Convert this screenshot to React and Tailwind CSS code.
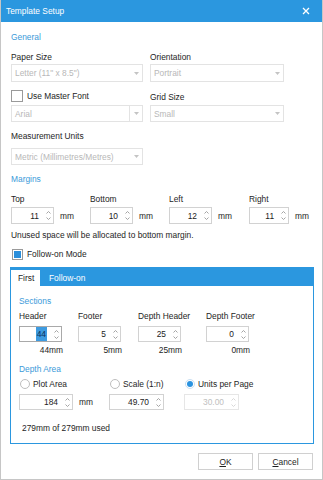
import React from "react";

const Caret = () => (
  <svg width="5" height="3" viewBox="0 0 5 3" className="shrink-0">
    <path d="M0 0 L5 0 L2.5 3 Z" fill="#c4c4c4" />
  </svg>
);

const Arrows = ({ dim }) => (
  <div className="flex flex-col items-center gap-[3px] w-[10px] shrink-0">
    <svg width="5" height="3" viewBox="0 0 5 3">
      <path d="M0.5 2.5 L2.5 0.5 L4.5 2.5" fill="none" stroke={dim ? "#d4d4d4" : "#9a9a9a"} strokeWidth="0.9" />
    </svg>
    <svg width="5" height="3" viewBox="0 0 5 3">
      <path d="M0.5 0.5 L2.5 2.5 L4.5 0.5" fill="none" stroke={dim ? "#d4d4d4" : "#9a9a9a"} strokeWidth="0.9" />
    </svg>
  </div>
);

const Select = ({ text, split, className }) => (
  <div className={`flex items-center border border-[#e3e3e3] bg-white text-[#b8b8b8] ${className}`}>
    <span className="flex-1 pl-[3px] truncate">{text}</span>
    {split && <div className="self-stretch w-px bg-[#e3e3e3]" />}
    <div className="w-[12px] flex justify-center">
      <Caret />
    </div>
  </div>
);

const Spin = ({ value, className, sel, dim }) => (
  <div
    className={`flex items-center border bg-white ${
      dim ? "border-[#e6e6e6] text-[#c0c0c0]" : sel ? "border-[#a9a9a9] text-[#222]" : "border-[#d2d2d2] text-[#222]"
    } ${className}`}
  >
    <div className="flex-1 flex justify-end pr-[4px]">
      {sel ? <span className="bg-[#3e9be0] text-[#0d2f58] px-[1px]">{value}</span> : <span>{value}</span>}
    </div>
    <Arrows dim={dim} />
  </div>
);

const Radio = ({ on, label }) => (
  <div className="flex items-center gap-[3px]">
    <div
      className={`w-[10px] h-[10px] rounded-full border flex items-center justify-center ${
        on ? "border-[#c9dff2]" : "border-[#bdbdbd]"
      }`}
    >
      {on && <div className="w-[6px] h-[6px] rounded-full bg-[#2b93e0]" />}
    </div>
    <span>{label}</span>
  </div>
);

export default function App() {
  return (
    <div className="w-[323px] h-[480px] bg-white border-x border-b border-[#c6c6c6] flex flex-col font-['Liberation_Sans',Arial,sans-serif] text-[8.4px] leading-[14px] text-[#1e1e1e]">
      {/* Title bar */}
      <div className="h-[22px] bg-[#2b97df] flex items-center justify-between pl-[5px] pr-[12px] text-white">
        <span>Template Setup</span>
        <svg width="8" height="8" viewBox="0 0 8 8">
          <path d="M1 1 L7 7 M7 1 L1 7" stroke="#fff" strokeWidth="1.3" />
        </svg>
      </div>

      <div className="flex flex-col px-[10px]">
        <div className="mt-[8px] text-[#3b9ad9]">General</div>

        {/* Paper size / Orientation */}
        <div className="mt-[6px] flex gap-[7px]">
          <div className="w-[132px] flex flex-col">
            <span>Paper Size</span>
            <Select text='Letter (11" x 8.5")' className="h-[18px]" />
          </div>
          <div className="w-[134px] flex flex-col">
            <span>Orientation</span>
            <Select text="Portrait" className="h-[18px]" />
          </div>
        </div>

        {/* Master font / Grid size */}
        <div className="mt-[6px] flex gap-[7px]">
          <div className="w-[132px] flex flex-col">
            <div className="h-[16px] flex items-center gap-[4px]">
              <div className="w-[12px] h-[12px] border border-[#9a9a9a] bg-white" />
              <span>Use Master Font</span>
            </div>
            <Select text="Arial" split className="h-[17px] mt-px" />
          </div>
          <div className="w-[134px] flex flex-col">
            <span className="pt-[2px] h-[16px]">Grid Size</span>
            <Select text="Small" className="h-[17px] mt-px" />
          </div>
        </div>

        <div className="mt-[7px]">Measurement Units</div>
        <Select text="Metric (Millimetres/Metres)" className="w-[132px] h-[17px] mt-[5px]" />

        <div className="mt-[7px] text-[#3b9ad9]">Margins</div>

        <div className="mt-[6px] flex">
          {[
            ["Top", "11", "w-[79px]"],
            ["Bottom", "10", "w-[79px]"],
            ["Left", "12", "w-[80px]"],
            ["Right", "11", "w-[60px]"],
          ].map(([label, v, w]) => (
            <div key={label} className={`${w} flex flex-col`}>
              <span>{label}</span>
              <div className="mt-px flex items-center gap-[6px]">
                <Spin value={v} className="w-[43px] h-[17px]" />
                <span>mm</span>
              </div>
            </div>
          ))}
        </div>

        <div className="mt-[4px]">Unused space will be allocated to bottom margin.</div>

        <div className="mt-[5px] flex items-center gap-[4px] pl-px">
          <div className="w-[11px] h-[11px] border border-[#9a9a9a] bg-white flex items-center justify-center">
            <div className="w-[7px] h-[7px] bg-[#2b8fdb]" />
          </div>
          <span>Follow-on Mode</span>
        </div>

        {/* Tab panel */}
        <div className="mt-[6px] -ml-px w-[304px] flex flex-col">
          <div className="h-[19px] bg-[#2b97df] flex items-end pl-px">
            <div className="h-[16px] w-[29px] bg-white flex items-center pl-[7px]">First</div>
            <div className="h-[16px] flex items-center pl-[9px] text-white">Follow-on</div>
          </div>
          <div className="h-[158px] border-x border-b border-[#2b97df] pl-[8px] flex flex-col">
            <div className="mt-[8px] text-[#3b9ad9]">Sections</div>
            <div className="mt-px flex">
              {[
                ["Header", "44", "w-[59px]", true],
                ["Footer", "5", "w-[60px]", false],
                ["Depth Header", "25", "w-[68px]", false],
                ["Depth Footer", "0", "w-[60px]", false],
              ].map(([label, v, w, sel]) => (
                <div key={label} className={`${w} flex flex-col`}>
                  <span>{label}</span>
                  <Spin value={v} sel={sel} className="w-[43px] h-[16px] mt-[3px]" />
                  <span className="w-[44px] text-right mt-px">{v}mm</span>
                </div>
              ))}
            </div>

            <div className="mt-[5px] text-[#3b9ad9]">Depth Area</div>
            <div className="mt-px flex pl-px">
              <div className="w-[90px]">
                <Radio label="Plot Area" />
              </div>
              <div className="w-[75px]">
                <Radio label="Scale (1:n)" />
              </div>
              <Radio on label="Units per Page" />
            </div>
            <div className="mt-[3px] flex items-center">
              <div className="w-[90px] flex items-center gap-[6px]">
                <Spin value="184" className="w-[54px] h-[16px]" />
                <span>mm</span>
              </div>
              <div className="w-[75px]">
                <Spin value="49.70" className="w-[55px] h-[16px]" />
              </div>
              <Spin value="30.00" dim className="w-[55px] h-[16px]" />
            </div>

            <div className="mt-[11px] pl-[3px]">279mm of 279mm used</div>
          </div>
        </div>

        {/* Buttons */}
        <div className="mt-[9px] flex justify-end gap-[5px] -mr-px">
          <button className="w-[55px] h-[17px] border border-[#d0d0d0] bg-white leading-[14px]">
            <span className="underline">O</span>K
          </button>
          <button className="w-[55px] h-[17px] border border-[#d0d0d0] bg-white leading-[14px]">
            <span className="underline">C</span>ancel
          </button>
        </div>
      </div>
    </div>
  );
}
